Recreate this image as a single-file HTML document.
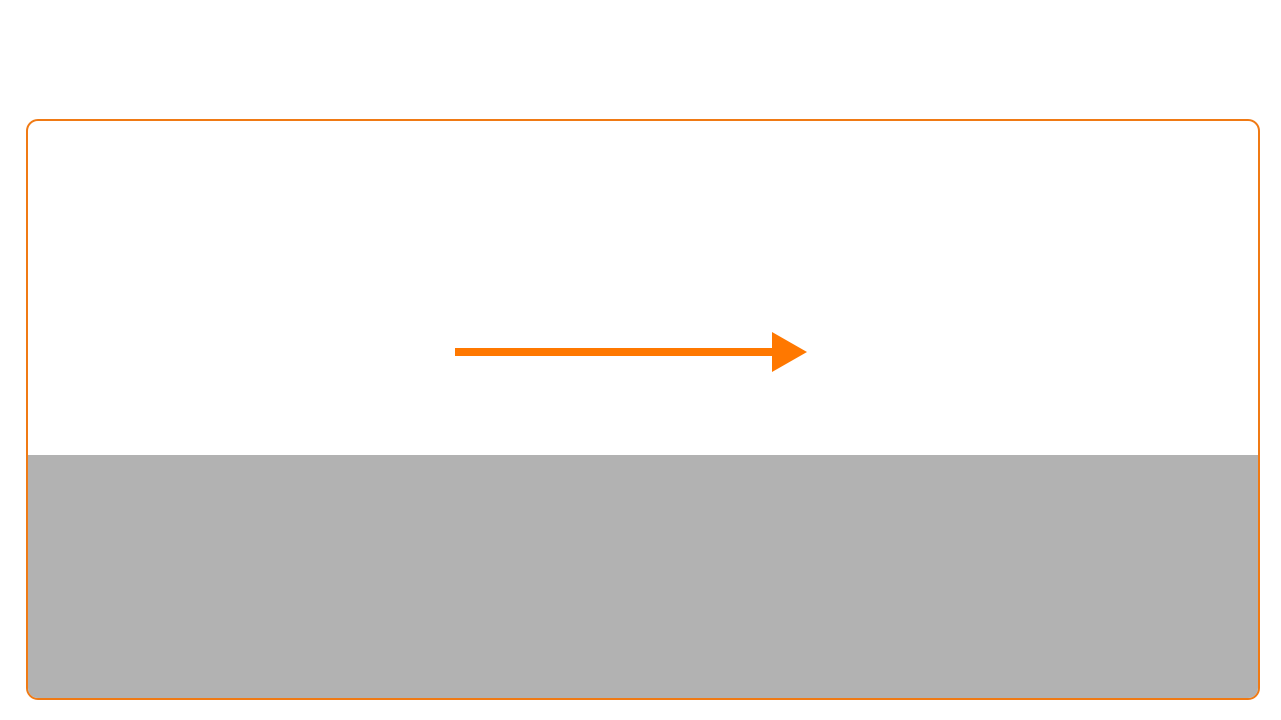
<!DOCTYPE html>
<html><head><style>
html,body{margin:0;padding:0;background:#fff;width:1281px;height:720px;overflow:hidden}
.box{position:absolute;left:26px;top:119px;width:1230px;height:577px;border:2px solid #f07a14;border-radius:12px;overflow:hidden;background:#fff}
.gray{position:absolute;left:0;right:0;top:334px;bottom:0;background:#b2b2b2}
svg{position:absolute;left:0;top:0}
</style></head><body>
<div class="box"><div class="gray"></div></div>
<svg width="1281" height="720"><rect x="455" y="348" width="320" height="8" fill="#ff7800"/><polygon points="772,332 807,352 772,372" fill="#ff7800"/></svg>
</body></html>
